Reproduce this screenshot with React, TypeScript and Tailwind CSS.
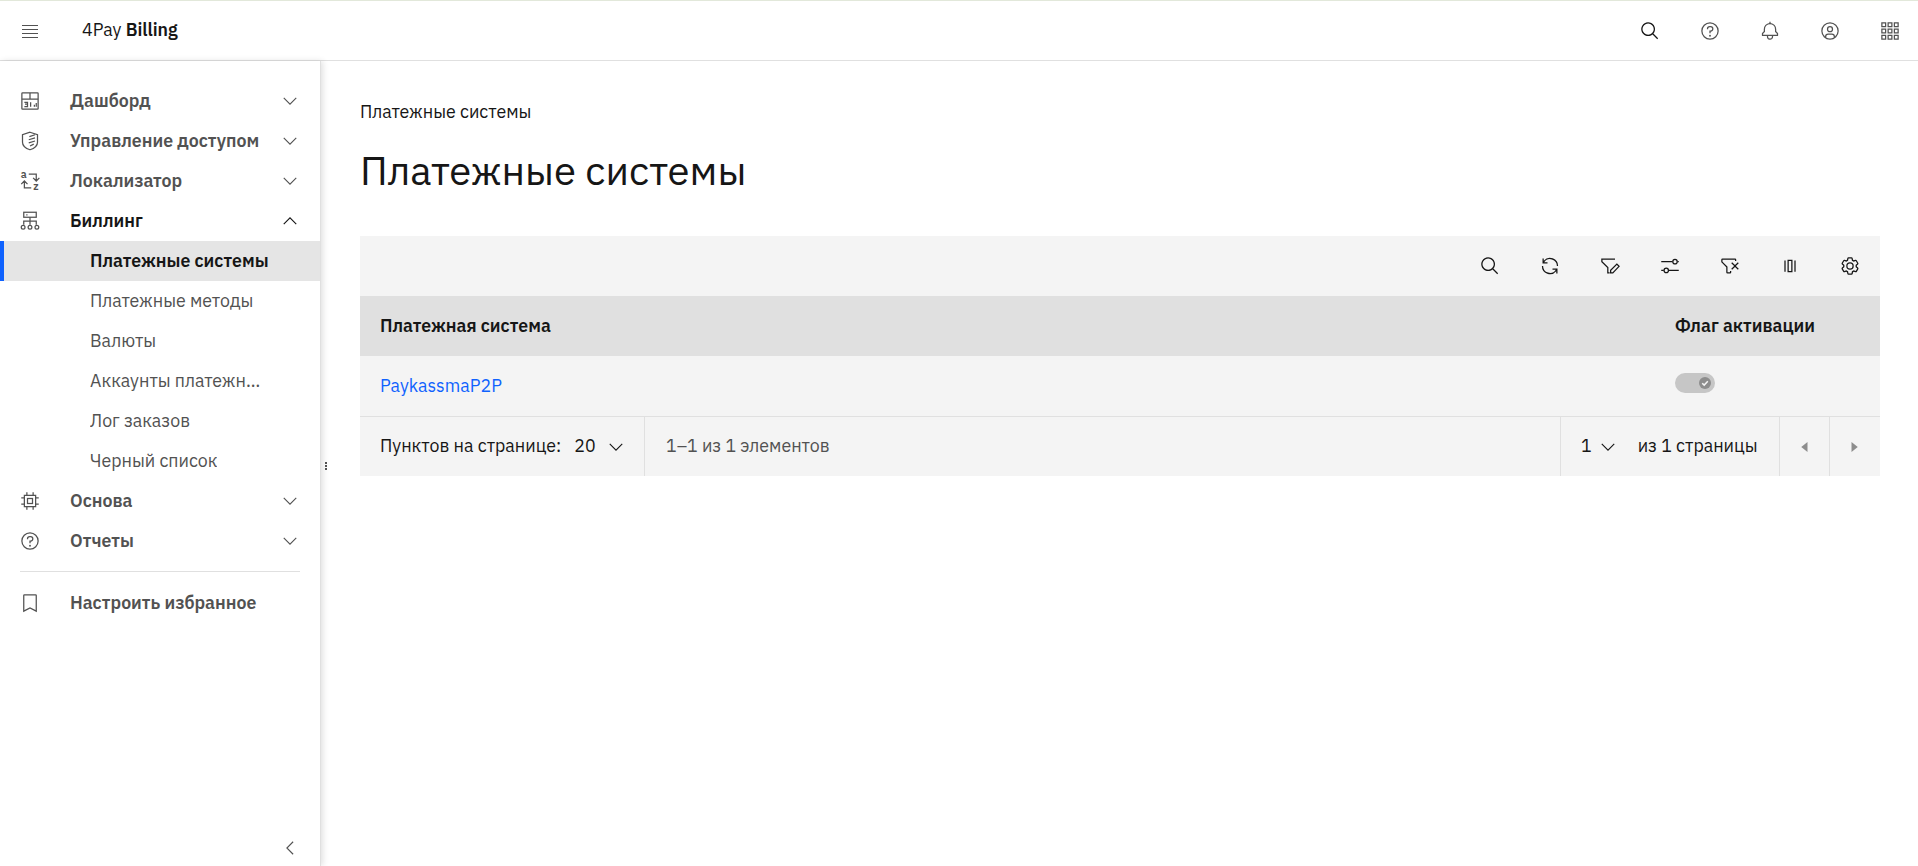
import type { ReactNode } from 'react'

const Ic = ({ children, className = '' }: { children: ReactNode; className?: string }) => (
  <svg viewBox="0 0 32 32" fill="currentColor" className={`w-5 h-5 shrink-0 ${className}`}>{children}</svg>
)

const Stroke = ({ children, className = '' }: { children: ReactNode; className?: string }) => (
  <svg viewBox="0 0 32 32" fill="none" stroke="currentColor" strokeWidth="2" className={`w-5 h-5 shrink-0 ${className}`}>{children}</svg>
)

const Search = () => <Ic><path d="M29 27.5859l-7.5521-7.5521a11.0177 11.0177 0 1 0-1.4141 1.4141L27.5859 29ZM4 13a9 9 0 1 1 9 9 9.01 9.01 0 0 1-9-9Z" /></Ic>

const Help = () => (
  <Ic>
    <path d="M16,2A14,14,0,1,0,30,16,14,14,0,0,0,16,2Zm0,26A12,12,0,1,1,28,16,12,12,0,0,1,16,28Z" />
    <circle cx="16" cy="23.5" r="1.5" />
    <path d="M17,8H15.5A4.49,4.49,0,0,0,11,12.5V13h2v-.5A2.5,2.5,0,0,1,15.5,10H17a2.5,2.5,0,0,1,0,5H15v4.5h2V17a4.5,4.5,0,0,0,0-9Z" />
  </Ic>
)

const Bell = () => <Ic><path d="M28.7071,19.293,26,16.5859V13a10.0136,10.0136,0,0,0-9-9.9492V1H15V3.0508A10.0136,10.0136,0,0,0,6,13v3.5859L3.2929,19.293A1,1,0,0,0,3,20v3a1,1,0,0,0,1,1h7v.7768a5.152,5.152,0,0,0,4.5,5.1987A5.0057,5.0057,0,0,0,21,25V24h7a1,1,0,0,0,1-1V20A1,1,0,0,0,28.7071,19.293ZM19,25a3,3,0,0,1-6,0V24h6Zm8-3H5V20.4141L7.707,17.707A1,1,0,0,0,8,17V13a8,8,0,0,1,16,0v4a1,1,0,0,0,.293.707L27,20.4141Z" /></Ic>

const User = () => (
  <Ic>
    <path d="M16,8a5,5,0,1,0,5,5A5,5,0,0,0,16,8Zm0,8a3,3,0,1,1,3-3A3.0034,3.0034,0,0,1,16,16Z" />
    <path d="M16,2A14,14,0,1,0,30,16,14.0158,14.0158,0,0,0,16,2ZM10,26.3765V25a3.0033,3.0033,0,0,1,3-3h6a3.0033,3.0033,0,0,1,3,3v1.3765a11.8989,11.8989,0,0,1-12,0Zm13.9925-1.4507A5.0016,5.0016,0,0,0,19,20H13a5.0016,5.0016,0,0,0-4.9925,4.9258,12,12,0,1,1,15.985,0Z" />
  </Ic>
)

const Apps = () => (
  <Stroke className="text-[#525252]">
    {[3, 13, 23].map(y => [3, 13, 23].map(x => <rect key={`${x}-${y}`} x={x} y={y} width="6" height="6" />))}
  </Stroke>
)

const Renew = () => <Ic><path d="M12 10H6.78A11 11 0 0 1 27 16h2A13 13 0 0 0 6 7.68V4H4v8h8zM20 22h5.22A11 11 0 0 1 5 16H3a13 13 0 0 0 23 8.32V28h2v-8h-8z" /></Ic>

const FilterEdit = () => (
  <Stroke>
    <path d="M24 5H3v4l9.5 9.5V27h3" />
    <path d="M17 27v-4l10-10 3.5 3.5-10 10.5Z" />
  </Stroke>
)

const Sliders = () => (
  <Stroke>
    <path d="M2 9h18M28 9h2M2 23h4M14 23h16" />
    <circle cx="24" cy="9" r="3.5" />
    <circle cx="10" cy="23" r="3.5" />
  </Stroke>
)

const FilterRemove = () => (
  <Ic>
    <path d="M30 11.414 28.586 10 24 14.586 19.414 10 18 11.414 22.586 16 18 20.585 19.415 22 24 17.414 28.587 22 30 20.587 25.414 16 30 11.414z" />
    <path d="M4 4a2 2 0 0 0-2 2v3.17a2 2 0 0 0 .586 1.415L10 18v8a2 2 0 0 0 2 2h4a2 2 0 0 0 2-2v-2h-2v2h-4v-8.83l-.586-.585L4 9.171V6h20v2h2V6a2 2 0 0 0-2-2Z" />
  </Ic>
)

const Columns = () => (
  <Stroke>
    <path d="M8 7v18M24 7v18" />
    <rect x="13" y="7" width="6" height="18" />
  </Stroke>
)

const Gear = () => (
  <Ic>
    <path d="M27,16.76c0-.25,0-.5,0-.76s0-.51,0-.77l1.92-1.68A2,2,0,0,0,29.3,11L26.94,7a2,2,0,0,0-1.73-1,2,2,0,0,0-.64.1l-2.43.82a11.35,11.35,0,0,0-1.31-.75l-.51-2.52a2,2,0,0,0-2-1.61H13.64a2,2,0,0,0-2,1.61l-.51,2.52a11.48,11.48,0,0,0-1.32.75L7.43,6.06A2,2,0,0,0,6.79,6,2,2,0,0,0,5.06,7L2.7,11a2,2,0,0,0,.41,2.51L5,15.24c0,.25,0,.5,0,.76s0,.51,0,.77L3.11,18.45A2,2,0,0,0,2.7,21L5.06,25a2,2,0,0,0,1.73,1,2,2,0,0,0,.64-.1l2.43-.82a11.35,11.35,0,0,0,1.31.75l.51,2.52a2,2,0,0,0,2,1.61h4.72a2,2,0,0,0,2-1.61l.51-2.52a11.48,11.48,0,0,0,1.32-.75l2.42.82a2,2,0,0,0,.64.1,2,2,0,0,0,1.73-1L29.3,21a2,2,0,0,0-.41-2.51ZM25.21,24l-3.43-1.16a8.86,8.86,0,0,1-2.71,1.57L18.36,28H13.64l-.71-3.55a9.36,9.36,0,0,1-2.7-1.57L6.79,24,4.43,20l2.72-2.4a8.9,8.9,0,0,1,0-3.13L4.43,12,6.79,8l3.43,1.16a8.86,8.86,0,0,1,2.71-1.57L13.64,4h4.72l.71,3.55a9.36,9.36,0,0,1,2.7,1.57L25.21,8,27.57,12l-2.72,2.4a8.9,8.9,0,0,1,0,3.13L27.57,20Z" />
    <path d="M16,22a6,6,0,1,1,6-6A5.94,5.94,0,0,1,16,22Zm0-10a3.91,3.91,0,0,0-4,4,3.91,3.91,0,0,0,4,4,3.91,3.91,0,0,0,4-4A3.91,3.91,0,0,0,16,12Z" />
  </Ic>
)

const Dashboard = () => (
  <Stroke>
    <rect x="3" y="3" width="26" height="26" rx="1" />
    <path d="M3 13h26M16 3v10" />
    <path d="M7 18h5v3H8M12 21v4H7M17 18v7M23 22v3M26 19v6" />
  </Stroke>
)

const Shield = () => (
  <Stroke>
    <path d="M16 2l12 4v12c0 6-5.5 10-12 12-6.500-2-12-6-12-12V6Z" />
    <path d="M15 9l9-3M14 14l10-3M14 19l10-3M16 24l6-3" />
  </Stroke>
)

const Translate = () => (
  <svg viewBox="0 0 32 32" className="w-5 h-5 shrink-0 overflow-visible" fill="none" stroke="currentColor" strokeWidth="2">
    <text x="1" y="11" fontSize="17" fill="currentColor" stroke="none">a</text>
    <text x="21" y="31" fontSize="17" fill="currentColor" stroke="none">z</text>
    <path d="M14 5h12v10M21 11l5 5 5-5M18 27H7V17M2 21l5-5 5 5" />
  </svg>
)

const Billing = () => (
  <Stroke>
    <rect x="6" y="2" width="20" height="8" />
    <path d="M10 6h2M16 10v12M6 22v-6h20v6" />
    <circle cx="5" cy="26" r="3" />
    <circle cx="16" cy="26" r="3" />
    <circle cx="27" cy="26" r="3" />
  </Stroke>
)

const Chip = () => (
  <Stroke>
    <rect x="7" y="7" width="18" height="18" />
    <rect x="12" y="12" width="8" height="8" />
    <path d="M11 2v5M21 2v5M11 25v5M21 25v5M2 11h5M2 21h5M25 11h5M25 21h5" />
  </Stroke>
)

const Bookmark = () => (
  <Stroke>
    <path d="M7 3h18a1 1 0 0 1 1 1v25l-10-5-10 5V4a1 1 0 0 1 1-1Z" />
  </Stroke>
)

const Chevron = ({ up = false }: { up?: boolean }) => (
  <svg viewBox="0 0 16 16" fill="none" stroke="currentColor" strokeWidth="0.9" className="w-5 h-5 shrink-0">
    <path d={up ? 'M3 10.5l5-5 5 5' : 'M3 5.5l5 5 5-5'} />
  </svg>
)

const Caret = ({ right = false }: { right?: boolean }) => (
  <svg viewBox="0 0 16 16" fill="currentColor" className="w-5 h-5">
    <path d={right ? 'M6 4l5 4-5 4Z' : 'M10 4L5 8l5 4Z'} />
  </svg>
)

function NavGroup({ icon, label, open = false, active = false, chevron = true }: { icon: ReactNode; label: string; open?: boolean; active?: boolean; chevron?: boolean }) {
  return (
    <div className={`h-10 flex items-center pl-5 pr-5 font-semibold ${active ? 'text-[#161616]' : 'text-[#525252]'}`}>
      <span className="w-5 mr-[30px] text-[#525252]">{icon}</span>
      <span className="flex-1">{label}</span>
      {chevron && <Chevron up={open} />}
    </div>
  )
}

function SubItem({ label, active = false }: { label: string; active?: boolean }) {
  return (
    <div className={`h-10 pt-px flex items-center ${active ? 'bg-[#e5e5e5] border-l-4 border-[#0f62fe] pl-[86px] font-semibold text-[#161616]' : 'pl-[90px] pr-[53px] text-[#525252]'}`}>
      <span className="truncate">{label}</span>
    </div>
  )
}

const toolbar = [<Search />, <Renew />, <FilterEdit />, <Sliders />, <FilterRemove />, <Columns />, <Gear />]

export default function App() {
  return (
    <div className="h-screen overflow-hidden flex flex-col bg-white text-[#161616] text-[17.75px] font-['IBM_Plex_Sans','Noto_Sans',sans-serif]">
      <header className="h-[61px] shrink-0 flex items-center border-t border-t-[#e2e8da] border-b border-b-[#e0e0e0]">
        <svg viewBox="0 0 20 20" fill="none" stroke="#525252" strokeWidth="1" className="w-5 h-5 ml-5">
          <path d="M2 4.5h16M2 8.5h16M2 12.5h16M2 16.5h16" />
        </svg>
        <span className="ml-[42px] flex-1">4Pay <span className="font-semibold">Billing</span></span>
        <div className="flex items-center -mr-[2px]">
          {[<Search />, <Help />, <Bell />, <User />, <Apps />].map((icon, i) => (
            <span key={i} className={`w-[60px] flex justify-center ${i === 0 ? 'text-[#161616]' : 'text-[#525252]'}`}>{icon}</span>
          ))}
        </div>
      </header>

      <div className="flex flex-1 min-h-0">
        <aside className="w-[321px] shrink-0 flex flex-col pt-5 border-r border-[#e0e0e0] shadow-[2px_0_6px_rgba(0,0,0,0.12)]">
          <NavGroup icon={<Dashboard />} label="Дашборд" />
          <NavGroup icon={<Shield />} label="Управление доступом" />
          <NavGroup icon={<Translate />} label="Локализатор" />
          <NavGroup icon={<Billing />} label="Биллинг" open active />
          <SubItem label="Платежные системы" active />
          <SubItem label="Платежные методы" />
          <SubItem label="Валюты" />
          <SubItem label="Аккаунты платежных систем" />
          <SubItem label="Лог заказов" />
          <SubItem label="Черный список" />
          <NavGroup icon={<Chip />} label="Основа" />
          <NavGroup icon={<Help />} label="Отчеты" />
          <div className="mx-5 mt-[10px] mb-[11px] h-px bg-[#e0e0e0]" />
          <NavGroup icon={<Bookmark />} label="Настроить избранное" chevron={false} />
          <div className="mt-auto h-[28px] flex justify-end pr-5 text-[#525252]">
            <svg viewBox="0 0 16 16" fill="none" stroke="currentColor" strokeWidth="0.9" className="w-5 h-5"><path d="M10.5 3l-5 5 5 5" /></svg>
          </div>
        </aside>

        <div className="relative w-0">
          <span className="absolute left-[4px] top-[401px] flex flex-col gap-px">
            <i className="w-0.5 h-0.5 bg-[#525252]" /><i className="w-0.5 h-0.5 bg-[#525252]" /><i className="w-0.5 h-0.5 bg-[#525252]" />
          </span>
        </div>

        <main className="flex-1 min-w-0 pl-[39px] pr-[38px]">
          <div className="mt-[39px] leading-6">Платежные системы</div>
          <h1 className="mt-[22px] text-[40px] leading-[48px] font-normal">Платежные системы</h1>

          <section className="mt-[42px] bg-[#f4f4f4]">
            <div className="h-[60px] flex items-center justify-end">
              {toolbar.map((icon, i) => (
                <span key={i} className="w-[60px] flex justify-center">{icon}</span>
              ))}
            </div>
            <div className="h-[60px] flex items-center bg-[#e0e0e0] font-semibold">
              <span className="flex-1 pl-5">Платежная система</span>
              <span className="w-[205px]">Флаг активации</span>
            </div>
            <div className="h-[60px] flex items-center">
              <a className="flex-1 pl-5 text-[#0f62fe]">PaykassmaP2P</a>
              <span className="w-[205px] -mt-[6px]">
                <span className="w-10 h-5 rounded-full bg-[#c6c6c6] flex items-center justify-end pr-1">
                  <span className="w-3 h-3 rounded-full bg-[#8d8d8d] flex items-center justify-center">
                    <svg viewBox="0 0 12 12" fill="none" stroke="#f4f4f4" strokeWidth="1.5" className="w-3 h-3"><path d="M3.2 6.2l2 1.9L8.800 4.200" /></svg>
                  </span>
                </span>
              </span>
            </div>
            <div className="h-[60px] flex items-center border-t border-[#e0e0e0]">
              <div className="h-full flex items-center pl-5 w-[285px] border-r border-[#e0e0e0]">
                <span>Пунктов на странице:</span>
                <span className="ml-[13px]">20</span>
                <span className="ml-[10px]"><Chevron /></span>
              </div>
              <span className="pl-[21px] flex-1 text-[#525252]">1–1 из 1 элементов</span>
              <div className="h-full flex items-center pl-5 w-[219px] border-l border-[#e0e0e0]">
                <span>1</span>
                <span className="ml-[6px]"><Chevron /></span>
                <span className="ml-5">из 1 страницы</span>
              </div>
              <span className="h-full w-[50px] flex items-center justify-center border-l border-[#e0e0e0] text-[#8d8d8d]"><Caret /></span>
              <span className="h-full w-[51px] pr-[3px] flex items-center justify-center border-l border-[#e0e0e0] text-[#8d8d8d]"><Caret right /></span>
            </div>
          </section>
        </main>
      </div>
    </div>
  )
}
